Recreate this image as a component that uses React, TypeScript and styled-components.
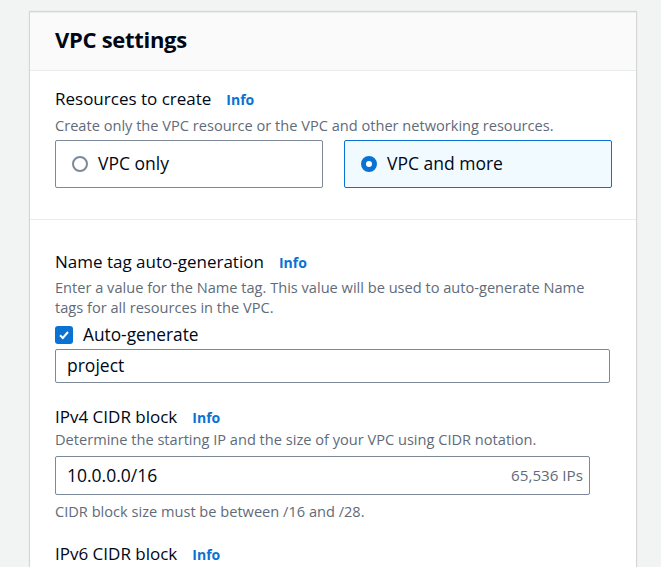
import * as React from "react";
import styled, { createGlobalStyle } from "styled-components";

const GlobalStyle = createGlobalStyle`
  body {
    margin: 0;
    background: #f2f3f3;
    font-family: "Open Sans", "Liberation Sans", sans-serif;
    color: #000716;
  }
`;

const SPage = styled.div`
  padding: 12px 25px 0 30px;
  height: 567px;
  box-sizing: border-box;
  overflow: hidden;
`;

const SCard = styled.div`
  width: 606px;
  background: #ffffff;
  box-shadow: 0 0 1px 1px rgba(0, 7, 22, 0.12);
  border-top: 1px solid #eaeded;
`;

const SHeader = styled.div`
  background: #fafafa;
  border-bottom: 1px solid #e9ebed;
  height: 58px;
  box-sizing: border-box;
  display: flex;
  align-items: center;
  padding: 0 0 5px 25px;
`;

const STitle = styled.h2`
  margin: 0;
  font-size: 22px;
  font-weight: 700;
  letter-spacing: -0.3px;
`;

const SSection = styled.div<{ $top: number; $bottom: number; $divider?: boolean }>`
  padding: ${p => p.$top}px 24px ${p => p.$bottom}px 25px;
  border-bottom: ${p => (p.$divider ? "1px solid #e9ebed" : "none")};
`;

const SField = styled.div<{ $gap?: number }>`
  margin-top: ${p => p.$gap || 0}px;
`;

const SLabel = styled.div`
  font-size: 17px;
  line-height: 22px;
  display: flex;
  align-items: baseline;
  gap: 15px;
`;

const SInfo = styled.span`
  font-size: 14px;
  font-weight: 700;
  color: #0972d3;
`;

const SDesc = styled.div<{ $gap?: number }>`
  font-size: 14.6px;
  line-height: 20px;
  color: #5f6b7a;
  margin-top: ${p => p.$gap || 0}px;
`;

const SRadioRow = styled.div`
  display: grid;
  grid-template-columns: 268px 268px;
  gap: 21px;
  margin-top: 5px;
`;

const SRadioCard = styled.div<{ $selected?: boolean }>`
  height: 48px;
  box-sizing: border-box;
  border: 1px solid ${p => (p.$selected ? "#0972d3" : "#7d8998")};
  background: ${p => (p.$selected ? "#f1faff" : "#ffffff")};
  border-radius: 2px;
  display: flex;
  align-items: center;
  gap: 10px;
  padding: 0 0 3px 16px;
  font-size: 17.5px;
`;

const SRadio = styled.span<{ $selected?: boolean }>`
  width: 16px;
  height: 16px;
  box-sizing: border-box;
  border-radius: 50%;
  border: ${p => (p.$selected ? "5px solid #0972d3" : "2px solid #7d8998")};
  background: #ffffff;
  flex-shrink: 0;
  margin-top: 3px;
`;

const SCheckRow = styled.label`
  display: flex;
  align-items: center;
  gap: 10px;
  margin-top: 5px;
  height: 24px;
  font-size: 17.3px;
`;

const SCheckbox = styled.span`
  width: 18px;
  height: 18px;
  border-radius: 3px;
  background: #0972d3;
  display: flex;
  align-items: center;
  justify-content: center;
  margin-top: 2px;
`;

const SInput = styled.div<{ $width: number; $height: number; $gap: number }>`
  width: ${p => p.$width}px;
  height: ${p => p.$height}px;
  margin-top: ${p => p.$gap}px;
  box-sizing: border-box;
  border: 1px solid #7d8998;
  border-radius: 2px;
  display: flex;
  align-items: center;
  justify-content: space-between;
  padding: 0 6px 2px 11px;
  font-size: 17.5px;
`;

const SHint = styled.span`
  font-size: 15.2px;
  color: #5f6b7a;
`;

const Label = ({ text }: { text: string }) => (
  <SLabel>
    {text}
    <SInfo>Info</SInfo>
  </SLabel>
);

class App extends React.Component {
  public render() {
    return (
      <SPage>
        <GlobalStyle />
        <SCard>
          <SHeader>
            <STitle>VPC settings</STitle>
          </SHeader>
          <SSection $top={17} $bottom={31} $divider>
            <Label text="Resources to create" />
            <SDesc $gap={4}>
              Create only the VPC resource or the VPC and other networking resources.
            </SDesc>
            <SRadioRow>
              <SRadioCard>
                <SRadio />
                VPC only
              </SRadioCard>
              <SRadioCard $selected>
                <SRadio $selected />
                VPC and more
              </SRadioCard>
            </SRadioRow>
          </SSection>
          <SSection $top={31} $bottom={40}>
            <Label text="Name tag auto-generation" />
            <SDesc $gap={3}>
              Enter a value for the Name tag. This value will be used to auto-generate Name
              tags for all resources in the VPC.
            </SDesc>
            <SCheckRow>
              <SCheckbox>
                <svg width="12" height="12" viewBox="0 0 12 12">
                  <path d="M2 6.2 L4.8 9 L10 3" fill="none" stroke="#fff" strokeWidth="2" />
                </svg>
              </SCheckbox>
              Auto-generate
            </SCheckRow>
            <SInput $width={555} $height={34} $gap={3}>
              project
            </SInput>
            <SField $gap={23}>
              <Label text="IPv4 CIDR block" />
              <SDesc $gap={0}>
                Determine the starting IP and the size of your VPC using CIDR notation.
              </SDesc>
              <SInput $width={535} $height={39} $gap={7}>
                10.0.0.0/16
                <SHint>65,536 IPs</SHint>
              </SInput>
              <SDesc $gap={6}>CIDR block size must be between /16 and /28.</SDesc>
            </SField>
            <SField $gap={22}>
              <Label text="IPv6 CIDR block" />
            </SField>
          </SSection>
        </SCard>
      </SPage>
    );
  }
}

export default App;
